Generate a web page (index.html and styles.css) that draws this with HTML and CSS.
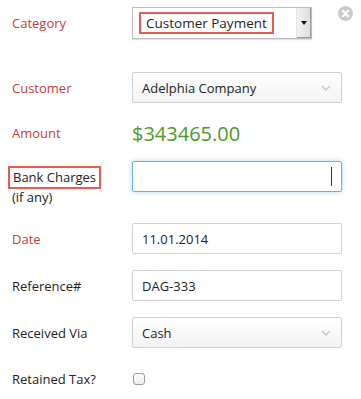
FILE: index.html
```html
<!DOCTYPE html>
<html lang="en">
<head>
    <meta charset="UTF-8">
    <meta name="viewport" content="width=device-width, initial-scale=1.0">
    <title>Record Payment</title>
    <link rel="stylesheet" href="styles.css">
</head>
<body>

    <div class="payment-form">

        <!-- Category -->
        <div class="row row-category">
            <label class="label required">Category</label>
            <div class="field">
                <div class="old-select">
                    <span class="mark">Customer Payment</span>
                    <span class="old-arrow"><span class="tri"></span></span>
                </div>
                <span class="close-btn">
                    <svg width="15" height="15" viewBox="0 0 15 15">
                        <circle cx="7.5" cy="7.5" r="7.5" fill="#c9c9c9"/>
                        <path d="M4.8 4.8 L10.2 10.2 M10.2 4.8 L4.8 10.2" stroke="#fff" stroke-width="2.2" stroke-linecap="round"/>
                    </svg>
                </span>
            </div>
        </div>

        <!-- Customer -->
        <div class="row row-customer">
            <label class="label required">Customer</label>
            <div class="field">
                <div class="select">
                    <span>Adelphia Company</span>
                    <svg class="chev" width="10" height="6" viewBox="0 0 10 6"><path d="M1 1 L5 5 L9 1" fill="none" stroke="#c4c4c4" stroke-width="1.4"/></svg>
                </div>
            </div>
        </div>

        <!-- Amount -->
        <div class="row row-amount">
            <label class="label required">Amount</label>
            <div class="field amount">$343465.00</div>
        </div>

        <!-- Bank charges -->
        <div class="row row-bank">
            <div class="label">
                <span class="mark">Bank Charges</span>
                <span class="sub">(if any)</span>
            </div>
            <div class="field">
                <div class="input focused"><span class="caret"></span></div>
            </div>
        </div>

        <!-- Date -->
        <div class="row row-date">
            <label class="label required">Date</label>
            <div class="field"><div class="input">11.01.2014</div></div>
        </div>

        <!-- Reference -->
        <div class="row row-ref">
            <label class="label">Reference#</label>
            <div class="field"><div class="input">DAG-333</div></div>
        </div>

        <!-- Received via -->
        <div class="row row-via">
            <label class="label">Received Via</label>
            <div class="field">
                <div class="select">
                    <span>Cash</span>
                    <svg class="chev" width="10" height="6" viewBox="0 0 10 6"><path d="M1 1 L5 5 L9 1" fill="none" stroke="#c4c4c4" stroke-width="1.4"/></svg>
                </div>
            </div>
        </div>

        <!-- Retained tax -->
        <div class="row row-tax">
            <label class="label">Retained Tax?</label>
            <div class="field"><span class="checkbox"></span></div>
        </div>

    </div>

</body>
</html>
```

FILE: styles.css
```css
body {
    font-family: "Open Sans", Arial, sans-serif;
    font-size: 13px;
    color: #222;
    margin: 0;
    background: #fff;
}
.payment-form {
    padding: 7px 0 0 12px;
}
.row {
    display: grid;
    grid-template-columns: 120px 210px;
    align-items: center;
}
.label {
    color: #222;
}
.label.required {
    color: #c0413b;
}
.field {
    position: relative;
}

/* category (old style select with annotation box) */
.row-category {
    height: 32px;
}
.old-select {
    width: 180px;
    height: 32px;
    box-sizing: border-box;
    border: 1px solid #bdbdbd;
    box-shadow: 0 1px 1px rgba(0,0,0,0.12);
    display: flex;
    align-items: center;
    padding-left: 6px;
    background: #fff;
}
.mark {
    display: inline-block;
    border: 2px solid #ea5a4f;
    padding: 0 3px;
    line-height: 19px;
    color: #222;
}
.old-select .mark {
    font-size: 13.5px;
    padding: 0 5px;
    line-height: 18px;
}
.old-arrow {
    margin-left: auto;
    width: 14px;
    height: 30px;
    background: linear-gradient(to right, #f2f2f2, #dcdcdc);
    border-left: 1px solid #e4e4e4;
    box-shadow: inset -1px -1px 0 #9a9a9a;
    display: flex;
    align-items: center;
    justify-content: center;
}
.tri {
    width: 0;
    height: 0;
    border-left: 3px solid transparent;
    border-right: 3px solid transparent;
    border-top: 4px solid #111;
}
.close-btn {
    position: absolute;
    left: 206px;
    top: -1px;
}

/* selects */
.row-customer {
    margin-top: 33px;
    height: 31px;
}
.row-via {
    margin-top: 16px;
    height: 31px;
}
.select {
    height: 31px;
    box-sizing: border-box;
    border: 1px solid #cfcfcf;
    border-radius: 2px;
    background: linear-gradient(#fff, #f3f3f3);
    display: flex;
    align-items: center;
    padding: 0 10px 0 9px;
}
.chev {
    margin-left: auto;
}

/* amount */
.row-amount {
    margin-top: 16px;
    height: 28px;
}
.amount {
    color: #4c9a2a;
    font-size: 20px;
}

/* inputs */
.input {
    height: 31px;
    box-sizing: border-box;
    border: 1px solid #d2d2d2;
    border-radius: 2px;
    background: #fff;
    display: flex;
    align-items: center;
    padding: 0 9px;
}
.input.focused {
    border-color: #66afe9;
    box-shadow: 0 0 5px rgba(102,175,233,0.5);
}
.caret {
    margin-left: auto;
    width: 1px;
    height: 19px;
    background: #333;
}
.row-bank {
    margin-top: 14px;
    height: 31px;
    align-items: start;
}
.row-bank .label {
    display: flex;
    flex-direction: column;
    align-items: flex-start;
    margin-left: -4px;
    padding-top: 5px;
}
.row-bank .label .sub {
    padding-left: 4px;
    line-height: 17px;
}
.row-date {
    margin-top: 31px;
    height: 31px;
}
.row-ref {
    margin-top: 16px;
    height: 31px;
}
.row-tax {
    margin-top: 22px;
    height: 18px;
}
.checkbox {
    display: block;
    margin-left: 1px;
    width: 12px;
    height: 12px;
    box-sizing: border-box;
    border: 1px solid #9a9a9a;
    border-radius: 3px;
    background: linear-gradient(#fff, #ececec);
}
```
